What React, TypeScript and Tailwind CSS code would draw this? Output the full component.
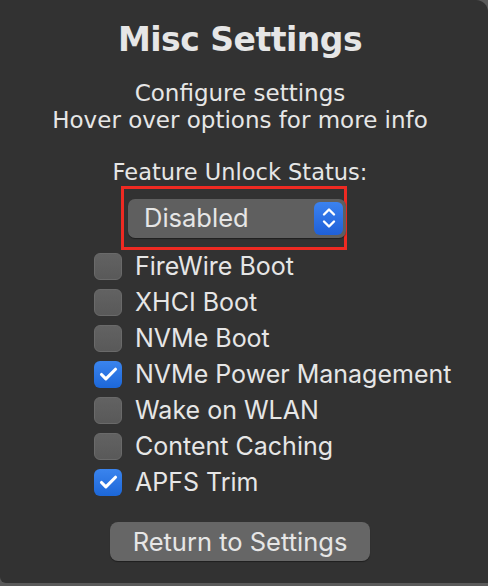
import { Check } from "lucide-react"

const options = [
  { label: "FireWire Boot", checked: false },
  { label: "XHCI Boot", checked: false },
  { label: "NVMe Boot", checked: false },
  { label: "NVMe Power Management", checked: true },
  { label: "Wake on WLAN", checked: false },
  { label: "Content Caching", checked: false },
  { label: "APFS Trim", checked: true },
]

const lucida = { fontFamily: '"DejaVu Sans", "Noto Sans", sans-serif' }
const sf = { fontFamily: 'Inter, "Noto Sans", sans-serif' }

export default function App() {
  return (
    <div className="w-[488px] h-[586px] bg-[#5a5a5a] overflow-hidden">
      <div className="h-[583px] bg-[#323232] rounded-tr-[12px] rounded-bl-[6px] pr-[8px] flex flex-col items-center text-[#e6e6e6]">
        <h1 style={lucida} className="mt-[20px] text-[33px] font-bold leading-[40px] tracking-[-0.5px]">
          Misc Settings
        </h1>

        <div style={lucida} className="mt-[20px] text-center text-[23px] leading-[27px]">
          <div>Configure settings</div>
          <div>Hover over options for more info</div>
        </div>

        <div style={lucida} className="mt-[25px] text-[22.5px] leading-[27px]">
          Feature Unlock Status:
        </div>

        {/* Popup */}
        <div className="self-start ml-[121px] mt-[0px] w-[226px] h-[64px] border-[3px] border-[#ee2a22] flex items-center pl-[4px]">
          <div className="w-[218px] h-[39px] shrink-0 rounded-[7px] bg-[#5f5f5f] shadow-[0_1px_1px_rgba(0,0,0,0.4)] flex items-center justify-between pl-[16px] pr-[3px]">
            <span style={sf} className="text-[25.5px] leading-none">Disabled</span>
            <div className="w-[29px] h-[33px] rounded-[6px] bg-gradient-to-b from-[#3b82f0] to-[#1f60d8] flex items-center justify-center">
              <svg width="18" height="26" viewBox="0 0 18 26" fill="none" stroke="white" strokeWidth="2.4" strokeLinecap="round" strokeLinejoin="round">
                <path d="M4 9.5 L9 4.5 L14 9.5" />
                <path d="M4 16.5 L9 21.5 L14 16.5" />
              </svg>
            </div>
          </div>
        </div>

        <div style={sf} className="self-start ml-[94px] mt-[3px] flex flex-col gap-[9px]">
          {options.map((o) => (
            <div key={o.label} className="flex items-center gap-[13px] h-[27px]">
              {o.checked ? (
                <div className="w-[28px] h-[27px] rounded-[6px] bg-gradient-to-b from-[#3a84ee] to-[#1c67d8] flex items-center justify-center">
                  <Check className="w-[21px] h-[21px] text-white" strokeWidth={3.6} />
                </div>
              ) : (
                <div className="w-[28px] h-[27px] rounded-[6px] bg-gradient-to-b from-[#626262] to-[#595959] border border-[#6a6a6a]" />
              )}
              <span className="text-[25px] leading-none">{o.label}</span>
            </div>
          ))}
        </div>

        <button
          style={sf}
          className="mt-[26px] w-[260px] h-[39px] rounded-[8px] bg-[#666666] shadow-[0_1px_1px_rgba(0,0,0,0.4)] text-[25.5px] leading-none text-[#e6e6e6]"
        >
          Return to Settings
        </button>
      </div>
    </div>
  )
}
